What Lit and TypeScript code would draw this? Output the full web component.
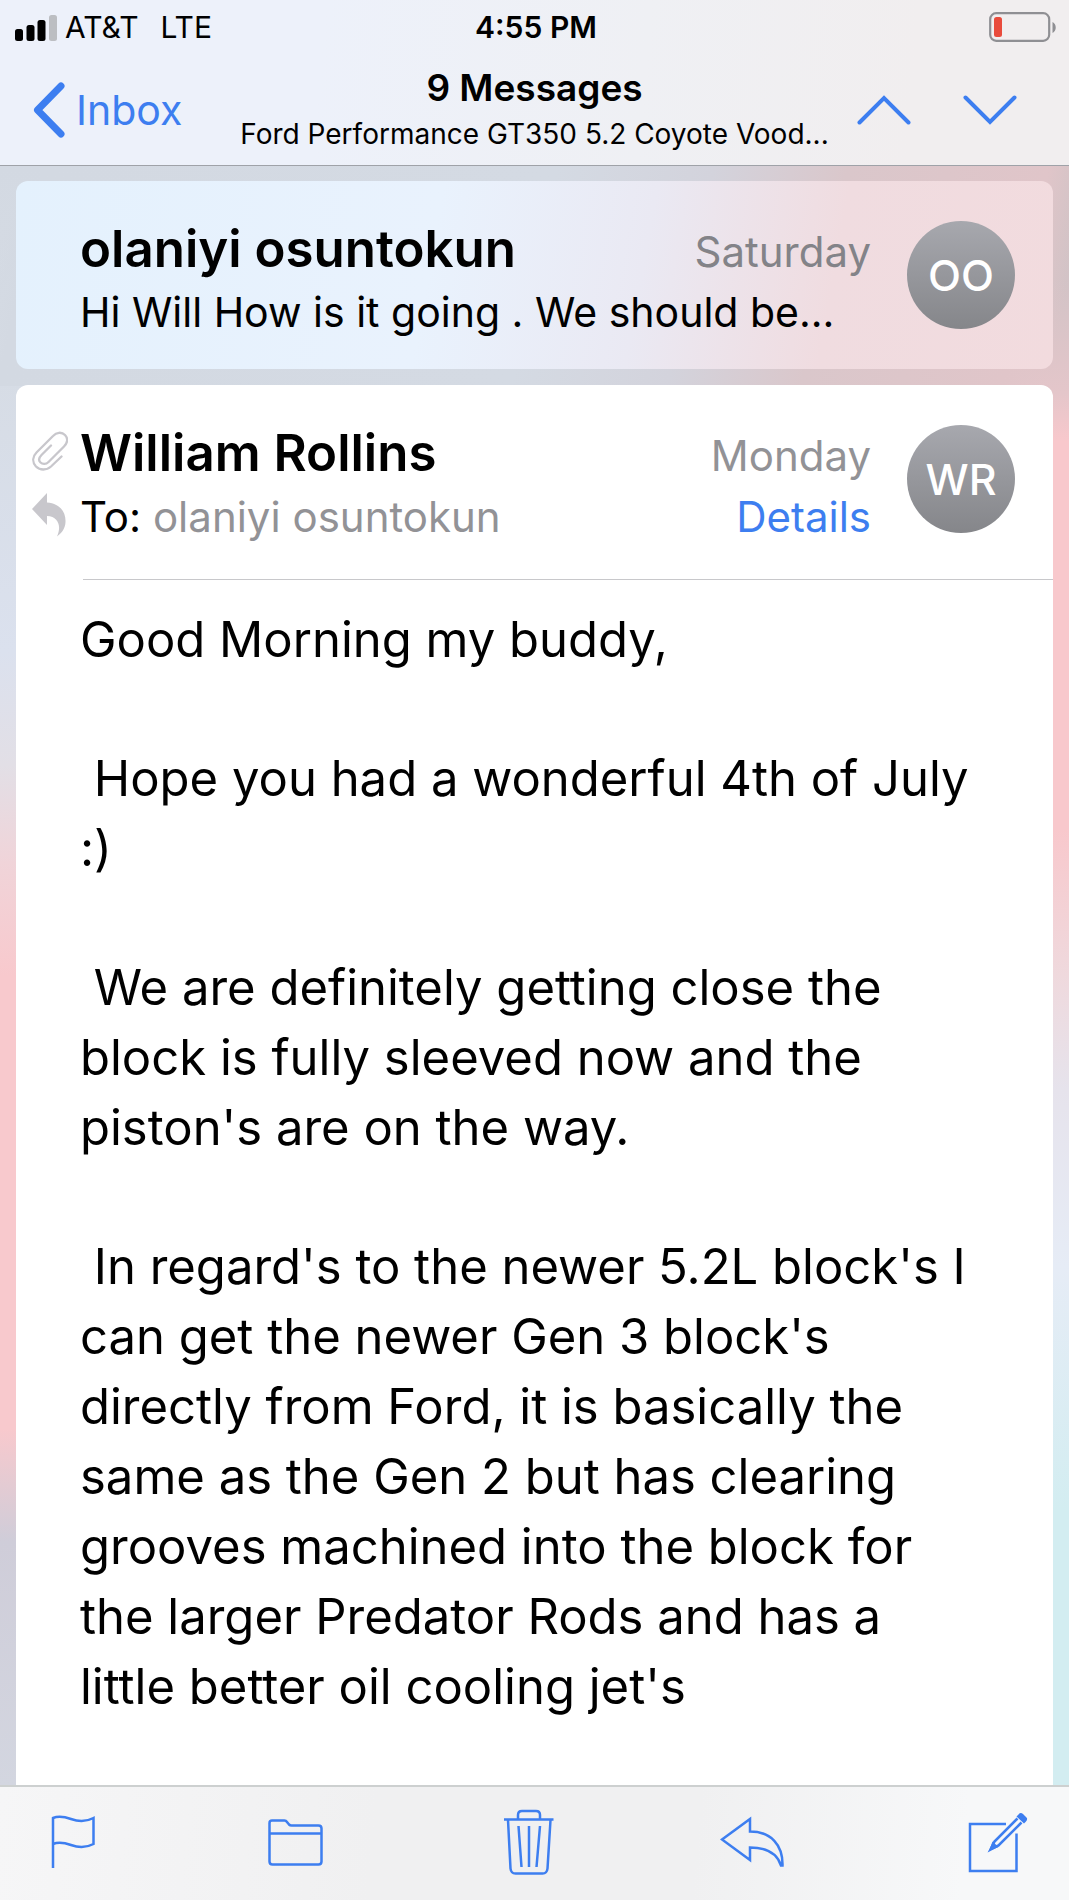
import { LitElement, html, css, svg } from "lit";
import { customElement, property } from "lit/decorators.js";

const NBSP = "\u00a0";

const paragraphs: string[] = [
  "Good Morning my buddy,",
  `${NBSP}Hope you had a wonderful 4th of July :)`,
  `${NBSP}We are definitely getting close the block is fully sleeved now and the piston's are on the way.`,
  `${NBSP}In regard's to the newer 5.2L block's I can get the newer Gen 3 block's directly from Ford, it is basically the same as the Gen 2 but has clearing grooves machined into the block for the larger Predator Rods and has a little better oil cooling jet's`,
];

const icon = (w: number, h: number, body: unknown) => html`
  <svg width=${w} height=${h} viewBox="0 0 ${w} ${h}" fill="none" stroke="currentColor" stroke-width="2" aria-hidden="true">${body}</svg>
`;

const icons = {
  signal: icon(42, 27, svg`
    <g stroke="none" fill="#000">
      <rect x="0" y="15" width="8" height="12" rx="2.5"/>
      <rect x="11.500" y="11" width="8" height="16" rx="2.500"/>
      <rect x="22.500" y="6" width="8" height="21" rx="2.500"/>
      <rect x="34" y="1" width="8" height="26" rx="2.500" fill="#bcbec2"/>
    </g>`),
  battery: icon(68, 30, svg`
    <rect x="1.200" y="1.200" width="59" height="27.600" rx="6" stroke="#8f8f93" stroke-width="2.200"/>
    <rect x="5" y="5" width="8" height="20" rx="2.500" fill="#e94b3c" stroke="none"/>
    <path d="M63.500 10 C67.800 12 67.800 19 63.500 21 Z" fill="#8f8f93" stroke="none"/>`),
  back: icon(34, 56, svg`<path d="M29 4 L5.500 28 L29 52" stroke-width="7" stroke-linecap="round" stroke-linejoin="round"/>`),
  up: icon(54, 30, svg`<path d="M2.500 27.500 L27 3 L51.500 27.500" stroke-width="4" stroke-linecap="round"/>`),
  down: icon(54, 30, svg`<path d="M2.500 2.500 L27 27 L51.500 2.500" stroke-width="4" stroke-linecap="round"/>`),
  clip: icon(36, 40, svg`
    <path d="M29.500 25.500 L19 35.500 C14.500 39.500 8 39.500 4 35.500 C0 31 0.500 25.500 4.500 21.500 L21 5 C24.500 1.300 29.500 0.500 33 4 C36.500 7.500 35.500 12 32 15.500 L16.500 31 C14 33.500 10.500 33.500 8.500 31.500 C6.500 29.500 7 26.500 9.500 24 L19 14.500"
      stroke="#c8c7cc" stroke-width="2.300" stroke-linecap="round"/>`),
  replied: icon(34, 44, svg`
    <path d="M0 16 L15 0 V9.500 C28 10.500 34 19 33.500 29 C33.300 35 30 40 25 43.500 C29.500 34 27 23.500 15 23 V32 Z" fill="#c8c7cc" stroke="none"/>`),
  flag: icon(44, 54, svg`
    <path d="M2 53 V3 C8 0.500 13 1.500 20 4 C28 7 35 7 42.500 3 V29 C35 33 28 33 20 30 C13 27.500 8 26.500 2 29" stroke-width="2.500"/>`),
  folder: icon(55, 48, svg`
    <path d="M1.500 5 Q1.500 2.500 4 2.500 H16.500 Q18 2.500 19 4 L21 6.500 Q22 7.500 23.500 7.500 H50.500 Q53.500 7.500 53.500 10.500 V43.500 Q53.500 46.500 50.500 46.500 H4.500 Q1.500 46.500 1.500 43.500 Z M1.500 15.500 H53.500" stroke-width="2.500"/>`),
  trash: icon(52, 66, svg`
    <g stroke-width="2.500">
      <path d="M1 10.500 H50.500 M15 10 V6 Q15 2 19 2 H33 Q37 2 37 6 V10"/>
      <path d="M5 11 L7.500 59.500 Q8 64.500 12.500 64.500 H39.500 Q44 64.500 44.500 59.500 L47.500 11"/>
      <path d="M15.500 17 L18.500 58 M26 17 V58 M37 17 L33.500 58"/>
    </g>`),
  reply: icon(66, 52, svg`
    <path d="M2 23.500 L30 3 V15.500 C51 15.500 63 29 62.500 49.500 H61 C57 37 47 31.500 30 31.500 V44 Z" stroke-width="2.500" stroke-linejoin="miter"/>`),
  compose: icon(60, 62, svg`
    <path d="M38 13 H2 V60 H48.500 V22.500" stroke-width="2.500"/>
    <path d="M49.500 7.500 L26.500 30.500 L22.500 38.500 L30.500 34.500 L53.500 11.500" stroke-width="2.600"/>
    <path d="M21 40 L24.500 30.500 L30.500 36 Z M50.500 3.500 Q52.500 1 55 3 L58.500 6.500 Q60 8 58 10.500 L56 12.500 L48.500 5.500 Z" fill="currentColor" stroke="none"/>`),
};

@customElement("contact-avatar")
class ContactAvatar extends LitElement {
  @property() initials = "";

  static styles = css`
    :host {
      flex: none;
      display: grid;
      place-items: center;
      width: 108px;
      height: 108px;
      border-radius: 50%;
      background: linear-gradient(#a7a8ae, #85868a);
      color: #fff;
      font-size: 43px;
      font-weight: 500;
      line-height: 1;
    }
  `;

  render() {
    return html`${this.initials}`;
  }
}

@customElement("app-root")
class AppRoot extends LitElement {
  static styles = css`
    :host {
      display: flex;
      flex-direction: column;
      min-height: 100vh;
      font-family: Inter, "Liberation Sans", sans-serif;
      color: #000;
      --blue: #3d7ef0;
      --muted: #929296;
    }
    * {
      box-sizing: border-box;
    }
    h1,
    h2,
    p {
      margin: 0;
    }
    svg {
      display: block;
    }
    button {
      padding: 0;
      border: 0;
      background: none;
      color: var(--blue);
      font: inherit;
      cursor: pointer;
    }
    a {
      color: var(--blue);
      text-decoration: none;
    }
    .header {
      background: linear-gradient(95deg, #edf1fa 30%, #eff0f4 60%, #f1eeef 85%);
      border-bottom: 1px solid #9fa2a8;
    }
    .status {
      display: grid;
      grid-template-columns: 1fr auto 1fr;
      align-items: center;
      height: 54px;
      padding: 0 12px 0 15px;
      font-size: 30px;
    }
    .carrier {
      display: flex;
      align-items: center;
      gap: 8px;
    }
    .network {
      margin-left: 14px;
    }
    .time {
      font-weight: 600;
    }
    .battery {
      justify-self: end;
    }
    .nav {
      display: grid;
      grid-template-columns: 1fr auto 1fr;
      align-items: center;
      height: 111px;
      padding: 0 32px;
    }
    .back {
      display: flex;
      align-items: center;
      gap: 10px;
      font-size: 41px;
    }
    .heading {
      text-align: center;
    }
    .title {
      font-size: 37px;
      line-height: 48px;
      font-weight: 600;
    }
    .subject {
      font-size: 28px;
      line-height: 44px;
      white-space: nowrap;
    }
    .steps {
      justify-self: end;
      display: flex;
      gap: 52px;
      padding-right: 20px;
    }
    .thread {
      flex: 1;
      display: flex;
      flex-direction: column;
      gap: 16px;
      padding: 15px 16px 0;
      background:
        linear-gradient(102deg, #d3d9e200 1%, #d3d9e2 4%, #d4dae3 50%, #d3d3dc 64%, #dac7cb 76%, #e0c5c9 94%, #e0c5c900 98%) top / 100% 220px no-repeat,
        linear-gradient(#d3d9e2 0%, #d6dce5 13%, #dbe1ee 30%, #e2dfe6 37%, #f0d4d9 43%, #f8c9cd 50%, #f8c9cd 78%, #cfcdd9 85%, #d3d6e0 100%) left / 50% 100% no-repeat,
        linear-gradient(#cfc3c5 0%, #d2c3c6 7%, #e4c6ca 14%, #f8c8cc 17%, #f8c8cc 41%, #efd9dd 50%, #e6e3ec 57%, #e6ecf6 68%, #d3edf1 83%) right / 50% 100% no-repeat;
    }
    .card {
      border-radius: 12px;
    }
    .earlier {
      height: 188px;
      background: linear-gradient(100deg, #e4f1fd 0%, #e9f2fd 40%, #eae9f3 60%, #f0dce0 78%, #f2dbde 100%);
    }
    .current {
      flex: 1;
      background: #fff;
      border-radius: 12px 12px 0 0;
    }
    .summary {
      display: flex;
      gap: 36px;
      padding: 40px 38px 0 64px;
    }
    .current .summary {
      min-height: 194px;
      padding-left: 16px;
      gap: 0;
    }
    .marks {
      flex: none;
      display: flex;
      flex-direction: column;
      gap: 22px;
      width: 48px;
      padding-top: 6px;
    }
    .lines {
      flex: 1;
      min-width: 0;
    }
    .current .lines {
      margin-right: 36px;
    }
    .row {
      display: flex;
      justify-content: space-between;
      align-items: baseline;
      font-size: 42px;
      line-height: 61px;
      white-space: nowrap;
    }
    .preview {
      font-size: 41px;
    }
    .sender {
      font-size: 51px;
      line-height: 56px;
      font-weight: 600;
    }
    .date,
    .recipient {
      color: var(--muted);
    }
    .earlier .date {
      color: #838388;
    }
    .rule {
      height: 1px;
      margin: 0 0 0 67px;
      border: 0;
      background: #c8c8cb;
    }
    .body {
      padding: 25px 68px 60px 64px;
      font-size: 49px;
      line-height: 70px;
    }
    .body p + p {
      margin-top: 69px;
    }
    .toolbar {
      display: grid;
      grid-template-columns: 217fr 235fr 217fr 248fr auto;
      justify-items: start;
      align-items: center;
      height: 115px;
      padding: 0 41px 4px 51px;
      border-top: 2px solid #cdd0d0;
      background: linear-gradient(95deg, #f6f6f7, #f0f0f1 35%, #f0f0f1 65%, #f7f8f9 90%);
    }
  `;

  render() {
    return html`
      <header class="header">
        <div class="status">
          <div class="carrier">${icons.signal}<span>AT&amp;T</span><span class="network">LTE</span></div>
          <div class="time">4:55 PM</div>
          <div class="battery">${icons.battery}</div>
        </div>
        <nav class="nav">
          <a class="back" href="#inbox">${icons.back}<span>Inbox</span></a>
          <div class="heading">
            <h1 class="title">9 Messages</h1>
            <p class="subject">Ford Performance GT350 5.2 Coyote Vood...</p>
          </div>
          <div class="steps">
            <button aria-label="Previous message">${icons.up}</button>
            <button aria-label="Next message">${icons.down}</button>
          </div>
        </nav>
      </header>
      <main class="thread">
        <article class="card earlier">
          <div class="summary">
            <div class="lines">
              <div class="row"><h2 class="sender">olaniyi osuntokun</h2><span class="date">Saturday</span></div>
              <p class="row preview">Hi Will How is it going . We should be...</p>
            </div>
            <contact-avatar initials="OO"></contact-avatar>
          </div>
        </article>
        <article class="card current">
          <div class="summary">
            <div class="marks">${icons.clip}${icons.replied}</div>
            <div class="lines">
              <div class="row"><h2 class="sender">William Rollins</h2><span class="date">Monday</span></div>
              <div class="row">
                <span>To: <span class="recipient">olaniyi osuntokun</span></span>
                <a href="#details">Details</a>
              </div>
            </div>
            <contact-avatar initials="WR"></contact-avatar>
          </div>
          <hr class="rule" />
          <div class="body">${paragraphs.map((text) => html`<p>${text}</p>`)}</div>
        </article>
      </main>
      <footer class="toolbar">
        <button aria-label="Flag">${icons.flag}</button>
        <button aria-label="Move to folder">${icons.folder}</button>
        <button aria-label="Delete">${icons.trash}</button>
        <button aria-label="Reply">${icons.reply}</button>
        <button aria-label="Compose">${icons.compose}</button>
      </footer>
    `;
  }
}
